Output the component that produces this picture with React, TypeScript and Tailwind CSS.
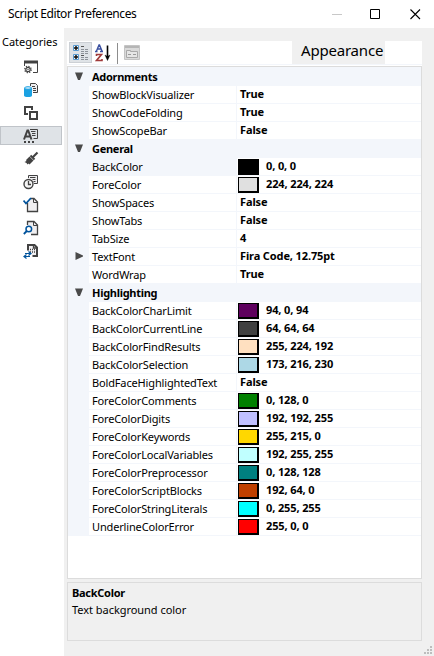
import type { ReactNode } from 'react';

type Item = { name: string; value: string; swatch?: string; selected?: boolean; expandable?: boolean };
type Group = { title: string; items: Item[] };

const groups: Group[] = [
  {
    title: 'Adornments',
    items: [
      { name: 'ShowBlockVisualizer', value: 'True' },
      { name: 'ShowCodeFolding', value: 'True' },
      { name: 'ShowScopeBar', value: 'False' },
    ],
  },
  {
    title: 'General',
    items: [
      { name: 'BackColor', value: '0, 0, 0', swatch: 'bg-black', selected: true },
      { name: 'ForeColor', value: '224, 224, 224', swatch: 'bg-[#e0e0e0]' },
      { name: 'ShowSpaces', value: 'False' },
      { name: 'ShowTabs', value: 'False' },
      { name: 'TabSize', value: '4' },
      { name: 'TextFont', value: 'Fira Code, 12.75pt', expandable: true },
      { name: 'WordWrap', value: 'True' },
    ],
  },
  {
    title: 'Highlighting',
    items: [
      { name: 'BackColorCharLimit', value: '94, 0, 94', swatch: 'bg-[#5e005e]' },
      { name: 'BackColorCurrentLine', value: '64, 64, 64', swatch: 'bg-[#404040]' },
      { name: 'BackColorFindResults', value: '255, 224, 192', swatch: 'bg-[#ffe0c0]' },
      { name: 'BackColorSelection', value: '173, 216, 230', swatch: 'bg-[#add8e6]' },
      { name: 'BoldFaceHighlightedText', value: 'False' },
      { name: 'ForeColorComments', value: '0, 128, 0', swatch: 'bg-[#008000]' },
      { name: 'ForeColorDigits', value: '192, 192, 255', swatch: 'bg-[#c0c0ff]' },
      { name: 'ForeColorKeywords', value: '255, 215, 0', swatch: 'bg-[#ffd700]' },
      { name: 'ForeColorLocalVariables', value: '192, 255, 255', swatch: 'bg-[#c0ffff]' },
      { name: 'ForeColorPreprocessor', value: '0, 128, 128', swatch: 'bg-[#008080]' },
      { name: 'ForeColorScriptBlocks', value: '192, 64, 0', swatch: 'bg-[#c04000]' },
      { name: 'ForeColorStringLiterals', value: '0, 255, 255', swatch: 'bg-[#00ffff]' },
      { name: 'UnderlineColorError', value: '255, 0, 0', swatch: 'bg-[#ff0000]' },
    ],
  },
];

function Icon({ children }: { children: ReactNode }) {
  return (
    <svg width="16" height="16" viewBox="0 0 16 16" fill="none" stroke="#424242" className="shrink-0">
      {children}
    </svg>
  );
}

const categoryIcons: ReactNode[] = [
  <>
    <path d="M1.500 7V2.500M14.500 2v11.500H10" />
    <path d="M1 3h14" strokeWidth="3" />
    <circle cx="5" cy="10.500" r="3.200" strokeWidth="1.300" strokeDasharray="1.250 1.260" />
    <circle cx="5" cy="10.500" r="2.200" strokeWidth="1.200" />
    <circle cx="5" cy="10.500" r="0.700" fill="#424242" stroke="none" />
  </>,
  <>
    <path d="M7.500 4V1.500h5l2 2v7H10" fill="#f0eff1" />
    <path d="M9 4.500h3M10 6.500h3M10 8.500h3" />
    <path d="M1 6v7.500c0 1 2 1.500 4 1.500s4-.500 4-1.500V6z" fill="#1ba1e2" stroke="none" />
    <ellipse cx="5" cy="6" rx="3.500" ry="1.300" fill="#d7effa" stroke="#1ba1e2" />
  </>,
  <>
    <path d="M5 9H2V2h7v3" strokeWidth="2" />
    <path d="M7 7h7v7H7z" strokeWidth="2" />
  </>,
  <>
    <path d="M1 11.500 4.400 2.500h.8l3.300 9M2.500 8.500H7" strokeWidth="2" />
    <path d="M7 1.500h7.500v9h-4M8 3.500h4.500M9 5.500h3.500M9 7.500h3.500" />
    <path d="M1 14h2M5 14h2M9 14h2" strokeWidth="2" />
  </>,
  <>
    <path d="M14.500 1.500 9.500 6.500" strokeWidth="2.200" />
    <path d="m7.500 4.500 4 4" strokeWidth="2" />
    <path d="m6.500 5.500 4 4-4 4-1-1-1 1-1-1.500L1.500 11l2-1-.500-1z" fill="#424242" stroke="none" />
  </>,
  <>
    <path d="M5.500 4V1.500h9v8H11" fill="#f0eff1" />
    <path d="M7 3.500h5.500M9.500 5.500h3M10.500 7.500h2" />
    <circle cx="5.500" cy="10" r="4.500" fill="#f5f5f5" strokeWidth="1.400" />
    <path d="M5.500 7v3.500H8" strokeWidth="1.300" />
  </>,
  <>
    <path d="M4.500 6v8.500h10V5L11 1.500H8" fill="#f0eff1" strokeWidth="1.300" />
    <path d="M10.500 1.500v4h4" />
    <path d="m.5 3.500 2.500 3L8 1" stroke="#00539c" strokeWidth="1.800" />
  </>,
  <>
    <path d="M4.500 5V1.500H11L14.500 5v9.500H8" fill="#f0eff1" strokeWidth="1.300" />
    <path d="M10.500 1.500v4h4" />
    <circle cx="5.800" cy="9" r="2.800" fill="#fff" stroke="#00539c" strokeWidth="1.500" />
    <path d="m3.800 11-3 3" stroke="#00539c" strokeWidth="1.800" />
  </>,
  <>
    <path d="M5 7.500V2h6.500L14 4.500V13H9.500" fill="#f0eff1" strokeWidth="2" />
    <path d="M10.500 2v3H14" strokeWidth="1.300" />
    <path d="M7 6.500h5M7 9h5" strokeDasharray="1 1" strokeWidth="1.300" />
    <path d="M2 10.500h6M5.500 8.500l2.500 2-2.500 2M7 13.500H1.500M3.500 11.500l-2.500 2 2.500 2" stroke="#00539c" strokeWidth="1.200" />
  </>,
];

function Caret({ open }: { open: boolean }) {
  return (
    <svg width="8" height="10" viewBox="0 0 8 10" fill="#4a4a4a" className="-mt-0.5">
      {open ? <path d="M0 1.500h8L5 9H3z" /> : <path d="M.5 1v8L8 5.500v-1z" />}
    </svg>
  );
}

function Row({ item }: { item: Item }) {
  return (
    <div className="flex h-[18px]">
      <div className="flex w-[21px] shrink-0 items-center bg-[#f3f6fb] pl-[7px]">
        {item.expandable && <Caret open={false} />}
      </div>
      <div
        className={`w-[147px] shrink-0 border-b border-[#f3f6fb] pl-[3px] text-[11px] leading-[17px] tracking-[-0.15px] whitespace-nowrap ${item.selected ? 'bg-[#f3f6fb]' : ''}`}
      >
        {item.name}
      </div>
      <div className="flex grow border-b border-l border-[#f3f6fb] text-[11px] leading-[15px] font-bold tracking-[-0.12px] whitespace-nowrap">
        {item.swatch ? (
          <>
            <span className={`mt-px ml-px h-4 w-[21px] shrink-0 border border-r-2 border-b-2 border-black ${item.swatch}`} />
            <span className="ml-[7px]">{item.value}</span>
          </>
        ) : (
          <span className="ml-[3px]">{item.value}</span>
        )}
      </div>
    </div>
  );
}

function Toolbar() {
  return (
    <div className="flex h-[23px] w-[355px] bg-white">
      <div className="mt-px ml-[2px] flex h-[21px] w-[23px] items-center justify-center border border-[#ccd0d5] bg-[#dfe3e7]">
        <svg width="17" height="17" viewBox="0 0 17 17" fill="none">
          <path d="M1.500 1.500h5v5h-5zM1.500 10.500h5v5h-5z" fill="#fff" stroke="#5a9bd0" />
          <path d="M2 4h4M4 2v4M2 13h4M4 11v4" stroke="#111" strokeWidth="1.500" />
          <path d="M9 2.500h3M9 11.500h3" stroke="#555" />
          <path d="M9 5.500h7M9 7.500h7M9 9.500h7M9 13.500h7M9 15.500h7" stroke="#8d9299" strokeDasharray="3 1" />
        </svg>
      </div>
      <svg width="17" height="19" viewBox="0 0 17 19" fill="none" className="mt-[3px] ml-[3px]">
        <path d="m1.500 7 2.500-6h.500L7 7M2 5h4M0 7.500h2.500M5 7.500h3" stroke="#3a50a0" strokeWidth="1.400" />
        <path d="M1.500 12v-1.500H6.500L1.500 16.500h5.500v-1.500" stroke="#a03a3a" strokeWidth="1.600" />
        <path d="M12.500 1.500v12" stroke="#000" strokeWidth="1.600" />
        <path d="M10 11l2.500 5.500L15 11l-2.500 1.500z" fill="#000" stroke="#000" strokeWidth=".4" />
      </svg>
      <div className="mt-[2px] ml-[5px] h-[21px] w-px bg-[#8d8d8d]" />
      <svg width="16" height="15" viewBox="0 0 16 15" fill="none" className="mt-1 ml-[6px]">
        <path d="M.5.5h15v14H.5z" fill="#dadada" stroke="#c4c4c4" />
        <path d="M1 2h14" stroke="#b5b5b5" strokeWidth="2" />
        <path d="M2.500 5.500h4v1h7v6h-11z" fill="#e6e6e6" stroke="#a9a9a9" />
        <path d="M4 9.500h3M9 9.500h3" stroke="#999" />
      </svg>
      <div className="ml-auto flex h-[23px] w-[93px] items-center bg-[#f0f0f0] pl-[9px] text-[15px] leading-5 tracking-[-0.2px]">
        <span className="-mt-1.5">Appearance</span>
      </div>
      <div className="w-[37px]" />
    </div>
  );
}

export default function App() {
  return (
    <div className="flex h-[656px] w-[434px] flex-col overflow-hidden bg-white font-['Noto_Sans','Open_Sans',sans-serif] text-black">
      <header className="flex h-7 shrink-0 items-center pl-2">
        <h1 className="pb-px text-[12px] leading-4 tracking-[-0.42px]">Script Editor Preferences</h1>
        <svg width="90" height="12" viewBox="0 0 90 12" fill="none" className="mr-[13px] ml-auto">
          <path d="M1 6.500h10" stroke="#c8c8c8" />
          <path d="M39.500 1.500h9v9h-9z" stroke="#000" />
          <path d="m79.500 1.500 9.500 9.500m0-9.500-9.500 9.500" stroke="#000" strokeWidth="1.100" />
        </svg>
      </header>
      <div className="flex min-h-0 grow">
        <aside className="w-16 shrink-0 bg-white pt-1.5">
          <h2 className="h-[22px] pl-[2px] text-[11px] leading-4 whitespace-nowrap">Categories</h2>
          <nav className="flex flex-col">
            {categoryIcons.map((icon, i) => (
              <div
                key={i}
                className={`flex w-[62px] items-start ${i === 3 ? 'mt-px mb-[3px] h-[19px] border border-[#c0c4c9] bg-[#dfe3e7] pt-px pl-[22px]' : 'h-[23px] pt-[3px] pl-[23px]'}`}
              >
                <Icon>{icon}</Icon>
              </div>
            ))}
          </nav>
        </aside>
        <main className="flex grow flex-col bg-[#f0f0f0] pt-[13px] pl-[3px]">
          <Toolbar />
          <div className="h-0.5 w-[355px] border-t border-[#f3f6fb] bg-white" />
          <section className="h-[513px] w-[355px] border border-[#dcdcdc] bg-white">
            <div className="h-px bg-[#f3f6fb]" />
            {groups.map((group) => (
              <div key={group.title}>
                <div className="flex h-[18px] bg-[#f3f6fb] pl-[7px]">
                  <span className="flex h-[18px] items-center">
                    <Caret open />
                  </span>
                  <span className="pl-[9px] text-[11px] leading-[17px] font-bold tracking-[-0.28px]">{group.title}</span>
                </div>
                {group.items.map((item) => (
                  <Row key={item.name} item={item} />
                ))}
              </div>
            ))}
          </section>
          <section className="mt-[3px] h-[59px] w-[355px] border border-[#dcdcdc] pt-px pl-1 text-[11px] leading-[17px]">
            <h3 className="font-bold tracking-[-0.28px]">BackColor</h3>
            <p className="tracking-[-0.04px]">Text background color</p>
          </section>
          <svg width="8" height="8" viewBox="0 0 8 8" fill="#bdbdbd" className="mt-[5px] mr-[2px] ml-auto">
            <path d="M6 0h2v2H6zM3 3h2v2H3zM6 3h2v2H6zM0 6h2v2H0zM3 6h2v2H3zM6 6h2v2H6z" />
          </svg>
        </main>
      </div>
    </div>
  );
}
